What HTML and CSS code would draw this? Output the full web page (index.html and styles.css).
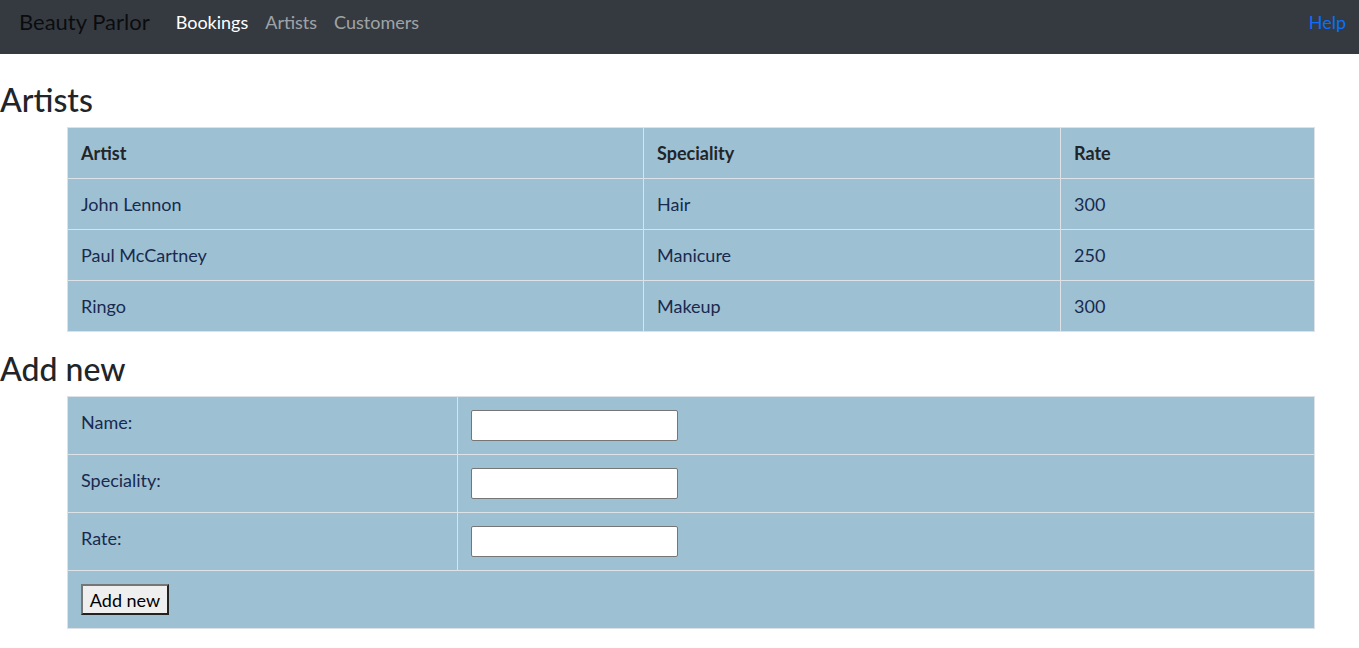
FILE: index.html
```html
<!DOCTYPE html>
<html lang="en">
<head>
<meta charset="utf-8">
<title>Beauty Parlor - Artists</title>
<link rel="stylesheet" href="styles.css">
</head>
<body>
<nav class="navbar">
  <a class="brand" href="#">Beauty Parlor</a>
  <ul class="nav-links">
    <li><a class="nav-link active" href="#">Bookings</a></li>
    <li><a class="nav-link" href="#">Artists</a></li>
    <li><a class="nav-link" href="#">Customers</a></li>
  </ul>
  <a class="help" href="#">Help</a>
</nav>

<main>
  <h3 class="section-title first">Artists</h3>
  <table class="grid artists">
    <colgroup>
      <col class="c-artist">
      <col class="c-spec">
      <col class="c-rate">
    </colgroup>
    <thead>
      <tr><th>Artist</th><th>Speciality</th><th>Rate</th></tr>
    </thead>
    <tbody>
      <tr><td>John Lennon</td><td>Hair</td><td>300</td></tr>
      <tr><td>Paul McCartney</td><td>Manicure</td><td>250</td></tr>
      <tr><td>Ringo</td><td>Makeup</td><td>300</td></tr>
    </tbody>
  </table>

  <h3 class="section-title">Add new</h3>
  <form>
    <table class="grid form-table">
      <colgroup>
        <col class="c-label">
        <col class="c-field">
      </colgroup>
      <tbody>
        <tr><td><label for="name">Name:</label></td><td><input id="name" type="text"></td></tr>
        <tr><td><label for="spec">Speciality:</label></td><td><input id="spec" type="text"></td></tr>
        <tr><td><label for="rate">Rate:</label></td><td><input id="rate" type="text"></td></tr>
        <tr><td colspan="2"><button type="button" class="btn">Add new</button></td></tr>
      </tbody>
    </table>
  </form>
</main>
</body>
</html>
```
FILE: styles.css
```css
* { box-sizing: border-box; }

body {
  margin: 0;
  font-family: Lato, "Noto Sans", sans-serif;
  font-size: 18px;
  color: #212529;
  background: #fff;
}

a { text-decoration: none; }

/* ---------- navbar ---------- */
.navbar {
  height: 54px;
  background: #343a40;
  display: flex;
  align-items: flex-start;
  padding: 7px 13px 0 19px;
}
.brand {
  font-size: 22px;
  color: rgba(0, 0, 0, 0.8);
  margin-right: 26px;
  line-height: 30px;
}
.nav-links {
  list-style: none;
  display: flex;
  gap: 17px;
  margin: 0;
  padding: 0;
  flex: 1;
}
.nav-link {
  color: rgba(255, 255, 255, 0.55);
  line-height: 30px;
}
.nav-link.active { color: #fff; }
.help {
  color: #0d6efd;
  line-height: 30px;
}

/* ---------- headings ---------- */
.section-title {
  font-size: 32px;
  font-weight: 500;
  line-height: 40px;
  margin: 17px 0 7px;
  color: #212529;
}
.section-title.first { margin-top: 26px; }

/* ---------- tables ---------- */
.grid {
  margin-left: 67px;
  width: 1247px;
  border-collapse: collapse;
  table-layout: fixed;
  background: #9ec0d3;
  border: 1px solid #dde2e8;
}
.grid.form-table { width: 1248px; }
.grid th,
.grid td {
  border: 1px solid #dde2e8;
  text-align: left;
  vertical-align: top;
  line-height: 30px;
}
.artists th,
.artists td {
  padding: 10px 13px;
}
.artists th {
  font-weight: 700;
  color: #212529;
}
.artists td { color: #182a4f; }

.c-artist { width: 576px; }
.c-spec { width: 417px; }
.c-rate { width: 254px; }

.c-label { width: 390px; }

.form-table td {
  padding: 13px 13px;
  color: #182a4f;
}
.form-table label { display: block; line-height: 24px; }

.form-table input {
  display: block;
  width: 207px;
  height: 31px;
  border: 1px solid #767676;
  border-radius: 2px;
  background: #fff;
  font: inherit;
  padding: 2px 4px;
}

.btn {
  display: block;
  width: 88px;
  height: 31px;
  padding: 0;
  font-family: inherit;
  font-size: 18px;
  color: #000;
  background: #efefef;
  border-style: solid;
  border-width: 2px;
  border-color: #767676 #222 #222 #767676;
  border-radius: 0;
  line-height: 26px;
}
```
